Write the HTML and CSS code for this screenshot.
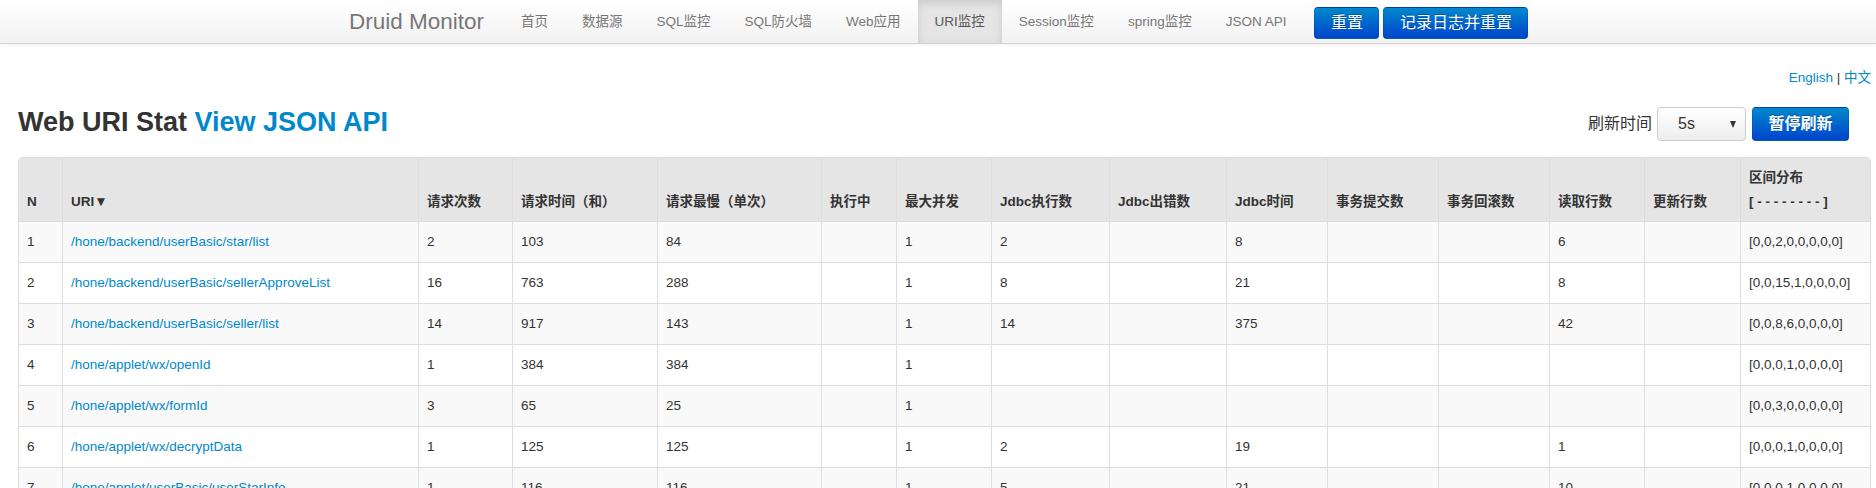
FILE: index.html
```html
<!DOCTYPE html>
<html lang="zh-CN">
<head>
<meta charset="utf-8">
<title>Druid Monitor - Web URI Stat</title>
<link rel="stylesheet" href="styles.css">
</head>
<body>
<div class="navbar">
  <div class="navbar-inner">
    <a class="brand" href="#">Druid Monitor</a>
    <ul class="nav">
      <li class="nav-item"><a class="nav-link" href="#">首页</a></li>
      <li class="nav-item"><a class="nav-link" href="#">数据源</a></li>
      <li class="nav-item"><a class="nav-link" href="#">SQL监控</a></li>
      <li class="nav-item"><a class="nav-link" href="#">SQL防火墙</a></li>
      <li class="nav-item"><a class="nav-link" href="#">Web应用</a></li>
      <li class="nav-item active"><a class="nav-link" href="#">URI监控</a></li>
      <li class="nav-item"><a class="nav-link" href="#">Session监控</a></li>
      <li class="nav-item"><a class="nav-link" href="#">spring监控</a></li>
      <li class="nav-item"><a class="nav-link" href="#">JSON API</a></li>
    </ul>
    <div class="nav-actions">
      <a class="btn btn-primary" href="#">重置</a>
      <a class="btn btn-primary" href="#">记录日志并重置</a>
    </div>
  </div>
</div>

<div class="main">
  <div class="lang"><a href="#">English</a> | <a href="#">中文</a></div>

  <div class="head-row">
    <h2 class="title">Web URI Stat <a class="title-link" href="#">View JSON API</a></h2>
    <div class="controls">
      <span class="refresh-label">刷新时间</span>
      <div class="select"><span>5s</span><span class="caret"></span></div>
      <a class="btn btn-primary btn-pause" href="#">暂停刷新</a>
    </div>
  </div>

  <table class="stat-table">
    <thead>
      <tr>
        <th class="c-n">N</th>
        <th class="c-uri">URI▼</th>
        <th class="c-w94">请求次数</th>
        <th class="c-w145">请求时间（和）</th>
        <th class="c-w164">请求最慢（单次）</th>
        <th class="c-w75">执行中</th>
        <th class="c-w95">最大并发</th>
        <th class="c-w118">Jdbc执行数</th>
        <th class="c-w117">Jdbc出错数</th>
        <th class="c-w101">Jdbc时间</th>
        <th class="c-w111">事务提交数</th>
        <th class="c-w111">事务回滚数</th>
        <th class="c-w95">读取行数</th>
        <th class="c-w96">更新行数</th>
        <th class="c-w130">区间分布<br>[ - - - - - - - - ]</th>
      </tr>
    </thead>
    <tbody>
      <tr>
        <td>1</td><td><a href="#">/hone/backend/userBasic/star/list</a></td><td>2</td><td>103</td><td>84</td><td></td><td>1</td><td>2</td><td></td><td>8</td><td></td><td></td><td>6</td><td></td><td>[0,0,2,0,0,0,0,0]</td>
      </tr>
      <tr>
        <td>2</td><td><a href="#">/hone/backend/userBasic/sellerApproveList</a></td><td>16</td><td>763</td><td>288</td><td></td><td>1</td><td>8</td><td></td><td>21</td><td></td><td></td><td>8</td><td></td><td>[0,0,15,1,0,0,0,0]</td>
      </tr>
      <tr>
        <td>3</td><td><a href="#">/hone/backend/userBasic/seller/list</a></td><td>14</td><td>917</td><td>143</td><td></td><td>1</td><td>14</td><td></td><td>375</td><td></td><td></td><td>42</td><td></td><td>[0,0,8,6,0,0,0,0]</td>
      </tr>
      <tr>
        <td>4</td><td><a href="#">/hone/applet/wx/openId</a></td><td>1</td><td>384</td><td>384</td><td></td><td>1</td><td></td><td></td><td></td><td></td><td></td><td></td><td></td><td>[0,0,0,1,0,0,0,0]</td>
      </tr>
      <tr>
        <td>5</td><td><a href="#">/hone/applet/wx/formId</a></td><td>3</td><td>65</td><td>25</td><td></td><td>1</td><td></td><td></td><td></td><td></td><td></td><td></td><td></td><td>[0,0,3,0,0,0,0,0]</td>
      </tr>
      <tr>
        <td>6</td><td><a href="#">/hone/applet/wx/decryptData</a></td><td>1</td><td>125</td><td>125</td><td></td><td>1</td><td>2</td><td></td><td>19</td><td></td><td></td><td>1</td><td></td><td>[0,0,0,1,0,0,0,0]</td>
      </tr>
      <tr>
        <td>7</td><td><a href="#">/hone/applet/userBasic/userStarInfo</a></td><td>1</td><td>116</td><td>116</td><td></td><td>1</td><td>5</td><td></td><td>21</td><td></td><td></td><td>10</td><td></td><td>[0,0,0,1,0,0,0,0]</td>
      </tr>
    </tbody>
  </table>
</div>
</body>
</html>
```

FILE: styles.css
```css
* {
  box-sizing: border-box;
}

html,
body {
  margin: 0;
  padding: 0;
  overflow: hidden;
}

body {
  font-family: "Liberation Sans", Arial, "Noto Sans CJK SC", sans-serif;
  font-size: 13.5px;
  line-height: 20px;
  color: #333;
  background: #fff;
}

a {
  color: #0088cc;
  text-decoration: none;
}

/* ---------- navbar ---------- */
.navbar {
  height: 44px;
  background: linear-gradient(to bottom, #ffffff, #f2f2f2);
  border-bottom: 1px solid #d4d4d4;
  box-shadow: 0 1px 4px rgba(0, 0, 0, 0.065);
}

.navbar-inner {
  width: 1218px;
  margin: 0 auto;
  height: 43px;
  display: flex;
  align-items: stretch;
}

.brand {
  padding: 0 20px;
  font-size: 22.5px;
  line-height: 43px;
  color: #777;
}

.nav {
  display: flex;
  list-style: none;
  margin: 0;
  padding: 0;
}

.nav-link {
  display: block;
  padding: 0 17px;
  line-height: 43px;
  font-size: 13.5px;
  color: #777;
}

.nav-item.active .nav-link {
  background: #e5e5e5;
  color: #555;
  box-shadow: inset 0 3px 8px rgba(0, 0, 0, 0.125);
}

.nav-actions {
  display: flex;
  align-items: flex-start;
  gap: 4px;
  margin-left: 11px;
  padding-top: 7px;
}

.btn {
  display: inline-block;
  height: 32px;
  line-height: 30px;
  padding: 0 15.5px;
  font-size: 16px;
  border-radius: 4px;
  border: 1px solid;
}

.btn-primary {
  color: #fff;
  background: linear-gradient(to bottom, #0088cc, #0044cc);
  border-color: rgba(0, 0, 0, 0.1) rgba(0, 0, 0, 0.1) rgba(0, 0, 0, 0.25);
  text-shadow: 0 -1px 0 rgba(0, 0, 0, 0.25);
}

/* ---------- main ---------- */
.main {
  padding: 0 5px 0 18px;
}

.lang {
  text-align: right;
  padding-top: 24px;
  line-height: 20px;
  font-size: 13.5px;
}

.head-row {
  display: flex;
  justify-content: space-between;
  align-items: flex-start;
  margin-top: 17px;
}

.title {
  margin: 0;
  font-size: 27px;
  line-height: 34px;
  font-weight: bold;
  color: #333;
}

.title-link {
  color: #0088cc;
}

.controls {
  display: flex;
  align-items: center;
  height: 34px;
  margin-top: 2px;
  margin-right: 22px;
}

.refresh-label {
  font-size: 16px;
  margin-right: 5px;
}

.select {
  width: 89px;
  height: 34px;
  display: flex;
  align-items: center;
  justify-content: space-between;
  padding: 0 9px 0 20px;
  border: 1px solid #ccc;
  border-radius: 4px;
  background: linear-gradient(to bottom, #ffffff, #ededed);
  font-size: 16px;
  color: #333;
}

.caret {
  width: 0;
  height: 0;
  border-left: 3px solid transparent;
  border-right: 3px solid transparent;
  border-top: 7px solid #333;
}

.btn-pause {
  margin-left: 6px;
  height: 34px;
  line-height: 32px;
  font-weight: bold;
}

/* ---------- table ---------- */
.stat-table {
  margin-top: 16px;
  width: 1853px;
  table-layout: fixed;
  border-collapse: separate;
  border-spacing: 0;
  border: 1px solid #ddd;
  border-radius: 4px;
}

.stat-table th {
  background: #e5e5e5;
  font-weight: bold;
  text-align: left;
  vertical-align: bottom;
  padding: 8px 8px 7px;
  line-height: 24px;
  border-left: 1px solid #ddd;
  color: #333;
}

.stat-table th:first-child {
  border-left: 0;
  border-top-left-radius: 4px;
}

.stat-table th:last-child {
  border-top-right-radius: 4px;
}

.stat-table td {
  padding: 8px;
  line-height: 24px;
  border-top: 1px solid #ddd;
  border-left: 1px solid #ddd;
  vertical-align: top;
  white-space: nowrap;
}

.stat-table td:first-child {
  border-left: 0;
}

.stat-table tbody tr:nth-child(odd) td {
  background: #f9f9f9;
}

.c-n { width: 43px; }
.c-uri { width: 356px; }
.c-w75 { width: 75px; }
.c-w94 { width: 94px; }
.c-w95 { width: 95px; }
.c-w96 { width: 96px; }
.c-w101 { width: 101px; }
.c-w111 { width: 111px; }
.c-w117 { width: 117px; }
.c-w118 { width: 118px; }
.c-w130 { width: 130px; }
.c-w145 { width: 145px; }
.c-w164 { width: 164px; }
```
